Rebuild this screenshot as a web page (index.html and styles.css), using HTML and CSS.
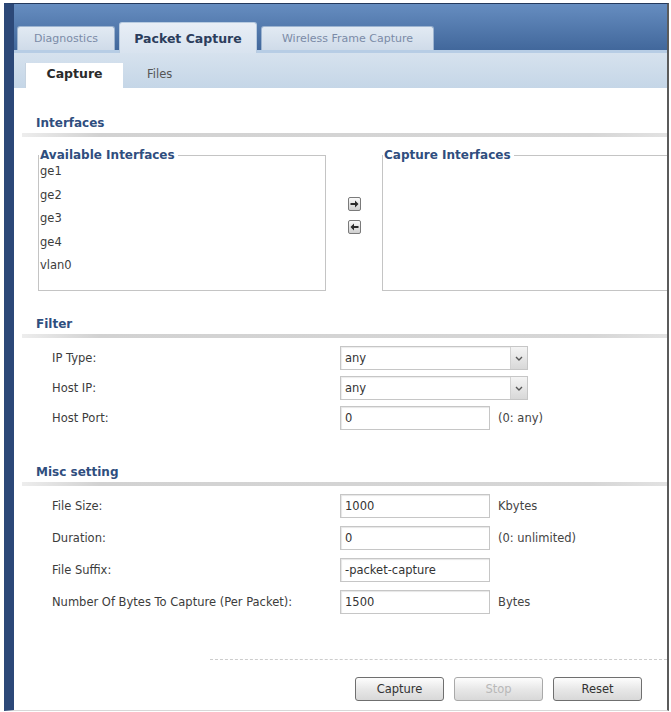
FILE: index.html
```html
<!DOCTYPE html>
<html lang="en">
<head>
    <meta charset="UTF-8">
    <meta name="viewport" content="width=device-width, initial-scale=1.0">
    <title>Packet Capture</title>
    <link rel="stylesheet" href="styles.css">
</head>
<body>
<div class="frame">
    <!-- Main tabs -->
    <div class="main-tabs">
        <div class="tab tab-diag">Diagnostics</div>
        <div class="tab active">Packet Capture</div>
        <div class="tab tab-wifi">Wireless Frame Capture</div>
    </div>
    <div class="sub-tabs">
        <div class="sub-tab active">Capture</div>
        <div class="sub-tab">Files</div>
    </div>

    <div class="content">
        <!-- Interfaces -->
        <h2 class="section-title">Interfaces</h2>
        <div class="iface-row">
            <fieldset class="iface-box">
                <legend>Available Interfaces</legend>
                <ul>
                    <li>ge1</li>
                    <li>ge2</li>
                    <li>ge3</li>
                    <li>ge4</li>
                    <li>vlan0</li>
                </ul>
            </fieldset>
            <div class="move-buttons">
                <button type="button" class="move" title="Add">
                    <svg width="9" height="8" viewBox="0 0 9 8"><path d="M0.5 3h4.5V0.5L8.5 4 5 7.5V5H0.5z" fill="#2b2b2b"/></svg>
                </button>
                <button type="button" class="move" title="Remove">
                    <svg width="9" height="8" viewBox="0 0 9 8"><path d="M8.5 3H4V0.5L0.5 4 4 7.5V5h4.5z" fill="#2b2b2b"/></svg>
                </button>
            </div>
            <fieldset class="iface-box wide">
                <legend>Capture Interfaces</legend>
                <ul></ul>
            </fieldset>
        </div>

        <!-- Filter -->
        <h2 class="section-title filter-title">Filter</h2>
        <div class="form-rows">
            <div class="form-row">
                <label>IP Type:</label>
                <div class="select">any<span class="select-arrow"><svg width="8" height="5" viewBox="0 0 8 5"><path d="M1 1l3 3 3-3" fill="none" stroke="#555" stroke-width="1.4"/></svg></span></div>
            </div>
            <div class="form-row">
                <label>Host IP:</label>
                <div class="select">any<span class="select-arrow"><svg width="8" height="5" viewBox="0 0 8 5"><path d="M1 1l3 3 3-3" fill="none" stroke="#555" stroke-width="1.4"/></svg></span></div>
            </div>
            <div class="form-row">
                <label for="hostPort">Host Port:</label>
                <input type="text" id="hostPort" class="text-input" value="0">
                <span class="unit">(0: any)</span>
            </div>
        </div>

        <!-- Misc setting -->
        <h2 class="section-title misc-title">Misc setting</h2>
        <div class="form-rows misc-rows">
            <div class="form-row">
                <label for="fileSize">File Size:</label>
                <input type="text" id="fileSize" class="text-input" value="1000">
                <span class="unit">Kbytes</span>
            </div>
            <div class="form-row">
                <label for="duration">Duration:</label>
                <input type="text" id="duration" class="text-input" value="0">
                <span class="unit">(0: unlimited)</span>
            </div>
            <div class="form-row">
                <label for="fileSuffix">File Suffix:</label>
                <input type="text" id="fileSuffix" class="text-input" value="-packet-capture">
            </div>
            <div class="form-row">
                <label for="bytes">Number Of Bytes To Capture (Per Packet):</label>
                <input type="text" id="bytes" class="text-input" value="1500">
                <span class="unit">Bytes</span>
            </div>
        </div>

        <div class="actions">
            <button type="button">Capture</button>
            <button type="button" disabled>Stop</button>
            <button type="button">Reset</button>
        </div>
    </div>
</div>
</body>
</html>
```

FILE: styles.css
```css
body {
    margin: 0;
    background-color: #fff;
    font-family: "DejaVu Sans", Verdana, sans-serif;
    font-size: 11.5px;
    color: #3c3c3c;
}
.frame {
    margin: 3px 0 0 4px;
    width: 665px;
    height: 708px;
    box-sizing: border-box;
    border-top: 1px solid #24395c;
    border-left: 10px solid #2c4878;
    border-right: 2px solid #5b5b5b;
    border-bottom: 1px solid #d8d8d8;
    display: flex;
    flex-direction: column;
    overflow: hidden;
}

/* Main tabs */
.main-tabs {
    height: 49px;
    flex-shrink: 0;
    display: flex;
    align-items: flex-end;
    gap: 4px;
    padding-left: 3px;
    background: linear-gradient(#668dc0, #3f6599);
    box-shadow: inset 0 -3px 0 #b7cde5;
}
.tab {
    height: 24px;
    margin-bottom: 3px;
    line-height: 24px;
    box-sizing: border-box;
    text-align: center;
    font-size: 11px;
    background: linear-gradient(#e2eaf3, #cfdbe9);
    border: 1px solid #9db4d0;
    border-bottom: none;
    border-radius: 3px 3px 0 0;
    color: #7b8ba7;
    white-space: nowrap;
}
.tab-diag {
    width: 98px;
}
.tab-wifi {
    width: 173px;
}
.tab.active {
    width: 138px;
    height: 31px;
    margin-bottom: 0;
    line-height: 32px;
    font-weight: bold;
    font-size: 12.5px;
    color: #2c3d5c;
    background: linear-gradient(#e8eef6, #d8e3ef);
    border-color: #b8cbe0;
}

/* Sub tabs */
.sub-tabs {
    height: 35px;
    flex-shrink: 0;
    display: flex;
    align-items: flex-end;
    padding-left: 11px;
    background: linear-gradient(#d6e2ee, #c5d6e7);
}
.sub-tab {
    height: 25px;
    line-height: 22px;
    padding-left: 24px;
    color: #555;
}
.sub-tab.active {
    width: 97px;
    padding: 0;
    text-align: center;
    background-color: #fff;
    border-left: 1px solid #c6d3e0;
    font-weight: bold;
    font-size: 12.5px;
    color: #2a2a2a;
}

/* Content */
.content {
    flex: 1;
    background-color: #fff;
}
.section-title {
    margin: 27px 0 0 8px;
    padding-left: 14px;
    font-size: 12px;
    line-height: 16px;
    font-weight: bold;
    color: #2f4e7e;
}
.section-title::after {
    content: "";
    display: block;
    height: 4px;
    margin: 2px 0 0 -14px;
    background: linear-gradient(to right, #ededed, #d2d2d2 12%, #d6d6d6 88%, #e2e2e2);
}
.filter-title {
    margin-top: 25px;
}
.misc-title {
    margin-top: 34px;
}

/* Interfaces */
.iface-row {
    display: flex;
    margin: 10px 0 0 24px;
}
.iface-box {
    width: 288px;
    box-sizing: border-box;
    margin: 0;
    padding: 0;
    min-width: 0;
    border: 1px solid #c4c4c4;
}
.iface-box legend {
    padding: 0 3px 0 1px;
    font-size: 12px;
    line-height: 16px;
    font-weight: bold;
    color: #2f4e7e;
}
.iface-box ul {
    list-style: none;
    margin: -3px 0 0;
    padding: 0 0 0 1px;
    height: 130px;
    line-height: 23.5px;
}
.iface-box.wide {
    flex: 1;
    width: auto;
    margin-right: -12px;
}
.move-buttons {
    width: 56px;
    display: flex;
    flex-direction: column;
    align-items: center;
    justify-content: center;
    gap: 9px;
    padding-bottom: 7px;
}
.move {
    width: 13px;
    height: 14px;
    padding: 0;
    display: flex;
    align-items: center;
    justify-content: center;
    border: 1px solid #7a7a7a;
    border-radius: 2px;
    background: linear-gradient(#fafafa, #cfcfcf);
}

/* Form rows */
.form-rows {
    display: flex;
    flex-direction: column;
    gap: 6px;
    margin: 8px 0 0 38px;
}
.misc-rows {
    gap: 8px;
}
.form-row {
    display: flex;
    align-items: center;
    height: 24px;
}
.form-row label {
    width: 288px;
    flex-shrink: 0;
}
.select {
    width: 188px;
    height: 24px;
    box-sizing: border-box;
    display: flex;
    align-items: center;
    padding-left: 4px;
    border: 1px solid #c6c6c6;
    box-shadow: inset 1px 1px 1px #ececec;
    color: #333;
}
.select-arrow {
    margin-left: auto;
    width: 16px;
    height: 100%;
    display: flex;
    align-items: center;
    justify-content: center;
    border-left: 1px solid #d2d2d2;
    background: linear-gradient(#f4f4f4, #d8d8d8);
}
.text-input {
    width: 150px;
    height: 24px;
    box-sizing: border-box;
    margin: 0;
    padding: 0 4px;
    border: 1px solid #c6c6c6;
    box-shadow: inset 1px 1px 1px #e6e6e6;
    font-family: inherit;
    font-size: inherit;
    color: #333;
}
.unit {
    margin-left: 8px;
    color: #444;
}

/* Buttons */
.actions {
    display: flex;
    gap: 10px;
    margin: 45px 0 0 196px;
    padding: 17px 0 0 145px;
    border-top: 1px dashed #cdcdcd;
}
.actions button {
    width: 89px;
    height: 24px;
    padding: 0;
    border: 1px solid #6f6f6f;
    border-radius: 3px;
    background: linear-gradient(#fdfdfd, #e8e8e8 50%, #d8d8d8);
    font-family: inherit;
    font-size: 11.5px;
    color: #333;
}
.actions button:disabled {
    color: #b8b8b8;
    border-color: #a9a9a9;
}
```
